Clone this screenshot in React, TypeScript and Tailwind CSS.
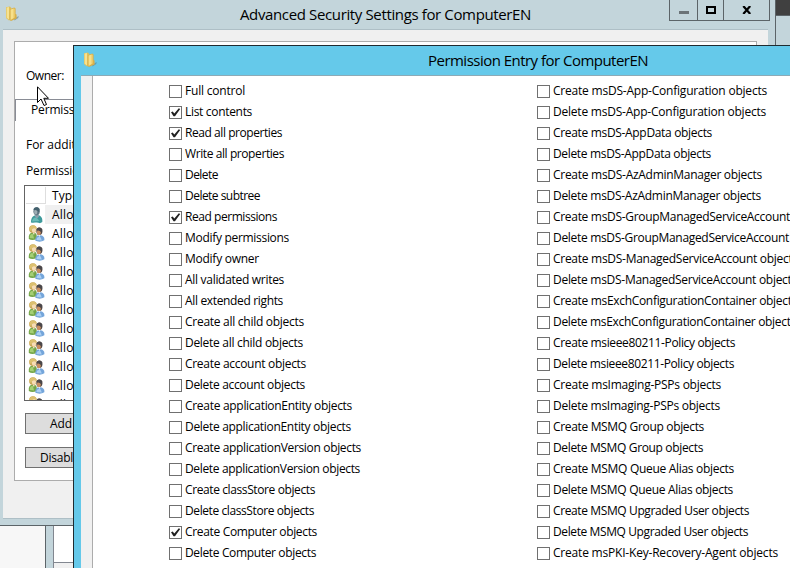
import { useLayoutEffect, useRef } from "react";

const FONT = "font-['Open_Sans','Noto_Sans',sans-serif]";

type Item = [label: string, width: number, checked?: boolean];

const leftItems: Item[] = [
  ["Full control", 60],
  ["List contents", 67, true],
  ["Read all properties", 97, true],
  ["Write all properties", 99],
  ["Delete", 33],
  ["Delete subtree", 75],
  ["Read permissions", 92, true],
  ["Modify permissions", 104],
  ["Modify owner", 74],
  ["All validated writes", 99],
  ["All extended rights", 98],
  ["Create all child objects", 119],
  ["Delete all child objects", 118],
  ["Create account objects", 121],
  ["Delete account objects", 120],
  ["Create applicationEntity objects", 167],
  ["Delete applicationEntity objects", 166],
  ["Create applicationVersion objects", 176],
  ["Delete applicationVersion objects", 175],
  ["Create classStore objects", 130],
  ["Delete classStore objects", 129],
  ["Create Computer objects", 132, true],
  ["Delete Computer objects", 131],
];

const rightItems: Item[] = [
  ["Create msDS-App-Configuration objects", 214],
  ["Delete msDS-App-Configuration objects", 213],
  ["Create msDS-AppData objects", 159],
  ["Delete msDS-AppData objects", 158],
  ["Create msDS-AzAdminManager objects", 209],
  ["Delete msDS-AzAdminManager objects", 208],
  ["Create msDS-GroupManagedServiceAccount", 237],
  ["Delete msDS-GroupManagedServiceAccount", 236],
  ["Create msDS-ManagedServiceAccount objects", 245],
  ["Delete msDS-ManagedServiceAccount objects", 244],
  ["Create msExchConfigurationContainer objects", 244],
  ["Delete msExchConfigurationContainer objects", 243],
  ["Create msieee80211-Policy objects", 182],
  ["Delete msieee80211-Policy objects", 181],
  ["Create msImaging-PSPs objects", 168],
  ["Delete msImaging-PSPs objects", 167],
  ["Create MSMQ Group objects", 151],
  ["Delete MSMQ Group objects", 150],
  ["Create MSMQ Queue Alias objects", 181],
  ["Delete MSMQ Queue Alias objects", 180],
  ["Create MSMQ Upgraded User objects", 196],
  ["Delete MSMQ Upgraded User objects", 195],
  ["Create msPKI-Key-Recovery-Agent objects", 225],
];

/** A label whose tracking is adjusted so that it takes exactly `width` pixels. */
function Label({ text, width, className = "" }: { text: string; width: number; className?: string }) {
  const ref = useRef<HTMLSpanElement>(null);
  useLayoutEffect(() => {
    const fit = () => {
      const el = ref.current;
      if (!el) return;
      el.style.letterSpacing = "0px";
      const natural = el.getBoundingClientRect().width;
      el.style.letterSpacing = `${(width - natural) / text.length}px`;
    };
    fit();
    document.fonts?.ready.then(fit);
  }, [text, width]);
  return (
    <span ref={ref} className={`inline-block shrink-0 whitespace-pre ${className}`}>
      {text}
    </span>
  );
}

function FolderIcon() {
  return (
    <svg width="16" height="16" viewBox="0 0 16 16" className="shrink-0">
      <path d="M9 12.5 L13.8 10 L13.2 12 L9.5 14.5Z" fill="#5f7f8a" opacity=".6" />
      <path d="M1 1.2 L4.8 .5 L6.2 1.8 V13 L4 14.6 L1 12Z" fill="#dfbf5a" />
      <path d="M1.6 1.4 L4 1 V13.4 L1.6 11.8Z" fill="#f6e291" />
      <path d="M5 3 L9.3 1.6 L10.6 2.6 V8 L11.6 8.6 V12.4 L6 15 L4.6 14Z" fill="#d8b04a" />
      <path d="M5.6 3.6 L8.8 2.4 V12 L5.6 14Z" fill="#f7e08a" />
      <path d="M8.8 2.4 L9.9 2.8 V11.6 L8.8 12Z" fill="#ecca66" />
    </svg>
  );
}

function UserIcon() {
  return (
    <svg width="16" height="18" viewBox="0 0 16 18" className="shrink-0">
      <path d="M2 16.5 C2 11.5 4 10 6.5 9.2 H9.5 C12.2 10 13.8 12 13.3 16 L11 17.2 C8 15.8 5 17.3 2 16.5Z" fill="#3e9a9b" />
      <path d="M3 15.5 C3.5 12 5.5 11 7.5 11.5 L10.5 15 L6 15.2Z" fill="#69bab7" />
      <path d="M6 8 H9 L10 10.5 L8 12.5 L6 10.5Z" fill="#8ba1ad" />
      <ellipse cx="7.6" cy="5.3" rx="3.2" ry="4.1" fill="#607783" />
      <ellipse cx="6.7" cy="6" rx="1.6" ry="2.5" fill="#9dadb4" />
      <path d="M4.5 3.7 C5 .8 9.5 .5 10.6 3.3 L10 6.5 C9 4 7 4.5 4.5 3.7Z" fill="#43606d" />
    </svg>
  );
}

function GroupIcon() {
  return (
    <svg width="17" height="17" viewBox="0 0 17 17" className="shrink-0">
      <path d="M.8 14 C.5 10 1.6 8.2 4 7.8 H6.8 C8.5 8.5 9 10 8.8 13.8 C6 15.4 3 15.4 .8 14Z" fill="#74a548" />
      <path d="M1.8 13 C1.6 10 2.8 8.7 5 9.2 L6 13.5Z" fill="#a4cf74" />
      <path d="M4.3 7.5 H6.8 L6 10Z" fill="#f0e2c4" />
      <ellipse cx="4.9" cy="4.1" rx="3.8" ry="3.9" fill="#c9a758" />
      <ellipse cx="5.9" cy="5" rx="2.1" ry="2.7" fill="#f6dcb6" />
      <path d="M1.2 4.6 C1.2 .2 6.5 -.6 8.6 2.2 L8 3.8 C6 2.6 4 3.3 3.2 6Z" fill="#dcc070" />
      <path d="M7.3 15.5 C7 12.3 8.6 11 10.5 10.3 H12.8 C15.5 11 16.8 12.7 16.3 15.3 C13.5 17.2 9.5 17 7.3 15.5Z" fill="#74a5da" />
      <path d="M8.4 15 C8.6 12 10.5 11.4 12.5 12.3 L13.8 15.4Z" fill="#acd0f3" />
      <path d="M10 9.6 H12.6 L11.6 12Z" fill="#e8eef5" />
      <ellipse cx="11.4" cy="6.3" rx="3" ry="3.8" fill="#594a44" />
      <ellipse cx="10.8" cy="7.4" rx="2" ry="2.7" fill="#c98f62" />
      <path d="M8.4 5.2 C8.6 1.9 13 1.8 14.4 4.6 L13.6 8 C12.9 5.6 11 5.6 8.4 5.2Z" fill="#4a474a" />
    </svg>
  );
}

function CheckRow({ item: [label, width, checked] }: { item: Item }) {
  return (
    <div className="flex h-[21px] items-center gap-[3px]">
      <span className="flex size-[13px] shrink-0 items-center justify-center border border-[#707070] bg-white">
        {checked && (
          <svg width="11" height="11" viewBox="0 0 11 11" className="shrink-0">
            <path d="M1 5.2 L2.7 4.5 L4.3 6.5 L8.8 1.2 L10.2 2 L5 9.3 H3.5Z" fill="#212121" />
          </svg>
        )}
      </span>
      <Label text={label} width={width} className="pb-[2px]" />
    </div>
  );
}

function BackWindow() {
  return (
    <div className="absolute top-0 left-0 h-[526px] w-[776px] border-r border-b border-[#5c6468] bg-[#c3d5db] pl-[3px]">
      <div className="flex h-[29px] items-start">
        <div className="mt-[6px] ml-[2px]"><FolderIcon /></div>
        <div className="mt-[3px] ml-[219px] h-[22px] text-[15px] leading-[22px]">
          <Label text="Advanced Security Settings for ComputerEN" width={291} />
        </div>
        <div className="mr-[5px] ml-auto flex h-[21px] border-x border-b border-[#5c6468]">
          <div className="flex w-[28px] items-center justify-center border-r border-[#5c6468]">
            <span className="mt-[5px] h-[3px] w-[10px] bg-[#6b7377]" />
          </div>
          <div className="flex w-[26px] items-center justify-center border-r border-[#5c6468]">
            <span className="h-[8px] w-[10px] border-2 border-black" />
          </div>
          <div className="flex w-[45px] items-center justify-center">
            <svg width="10" height="8" viewBox="0 0 10 8"><path d="M1.3 0 L8.2 8 M8.2 0 L1.3 8" stroke="#000" strokeWidth="2.2" /></svg>
          </div>
        </div>
      </div>
      <div className="h-[490px] w-[765px] border-y border-[#aebfc6] bg-[#f0f0f0] pt-[11px] pl-[11px]">
        <div className="h-[440px] w-[743px] border border-[#acacac] bg-white">
          <div className="h-[57px] pt-[25px] pl-[11px] leading-[18px]"><Label text="Owner:" width={38} /></div>
          <div className="h-[22px] border-t border-l border-[#898c95] pl-[15px] leading-[19px]"><Label text="Permissions" width={66} /></div>
          <div className="h-[26px] pt-[15px] pl-[11px] leading-[18px]"><Label text="For additional" width={77} /></div>
          <div className="h-[38px] pt-[15px] pl-[11px] leading-[18px]"><Label text="Permission entries:" width={104} /></div>
          <div className="ml-[9px] h-[216px] w-[720px] overflow-hidden border border-[#646464] bg-white">
            <div className="flex h-[19px] items-center">
              <span className="ml-px h-[17px] w-[20px] border-r border-b border-[#dedede]" />
              <span className="ml-[6px] leading-[20px]"><Label text="Type" width={27} /></span>
            </div>
            {Array.from({ length: 11 }, (_, i) => (
              <div key={i} className="flex h-[19px] items-center pl-[3px]">
                <span className="flex w-[17px] shrink-0 justify-center">{i === 0 ? <UserIcon /> : <GroupIcon />}</span>
                <span className={i === 0 ? "flex h-full grow items-center bg-[#f0f0f0] pl-[7px]" : "flex h-full grow items-center pl-[7px]"}>
                  <Label text="Allow" width={31} />
                </span>
              </div>
            ))}
          </div>
          <div className="mt-[12px] ml-[10px] flex h-[21px] w-[76px] items-center border border-[#707070] bg-[#dddddd] pl-[24px]"><Label text="Add" width={22} /></div>
          <div className="mt-[13px] ml-[10px] flex h-[21px] w-[130px] items-center border border-[#707070] bg-[#dddddd] pl-[14px]"><Label text="Disable inheritance" width={103} /></div>
        </div>
      </div>
    </div>
  );
}

function FrontWindow() {
  return (
    <div className="absolute top-[45px] left-[73px] h-[523px] w-[717px] overflow-hidden border-t border-l border-[#1f2b30] bg-[#65c9ea] pl-[7px]">
      <div className="flex h-[29px] items-start">
        <div className="mt-[6px] ml-[2px]"><FolderIcon /></div>
        <div className="mt-[3px] ml-[329px] text-[15px] leading-[22px]"><Label text="Permission Entry for ComputerEN" width={220} /></div>
      </div>
      <div className="h-[493px] border-t border-[#8daab6] bg-[#f0f0f0] pl-[11px]">
        <div className="flex h-full border-l border-[#acacac] bg-white pt-[5px] pl-[76px]">
          <div className="w-[368px] shrink-0">{leftItems.map((item) => <CheckRow key={item[0]} item={item} />)}</div>
          <div className="shrink-0">{rightItems.map((item) => <CheckRow key={item[0]} item={item} />)}</div>
        </div>
      </div>
    </div>
  );
}

export default function App() {
  return (
    <div className={`relative h-[568px] w-[790px] overflow-hidden bg-[#c3d5db] text-[12px] text-black ${FONT}`}>
      <div className="ml-auto h-[16px] w-[14px] border-b border-[#5c6468] bg-[#404040]" />
      <div className="absolute top-[526px] left-0 flex h-[42px] w-[73px] bg-[#c3d5db]">
        <div className="w-[46px] border-r border-[#5c6468] bg-[#f7f7f7]" />
        <div className="ml-[7px] grow border-l border-[#828790] bg-[#f0f0f0]">
          <div className="h-[37px] border-b border-[#828790] bg-white" />
        </div>
      </div>
      <BackWindow />
      <FrontWindow />
      <svg width="13" height="21" viewBox="0 0 13 21" className="absolute top-[86px] left-[37px]">
        <path d="M.5.8 V16.5 L4 13 L7 19.5 L9.5 18.5 L6.8 12.3 H11.5Z" fill="#fff" stroke="#000" />
      </svg>
    </div>
  );
}
